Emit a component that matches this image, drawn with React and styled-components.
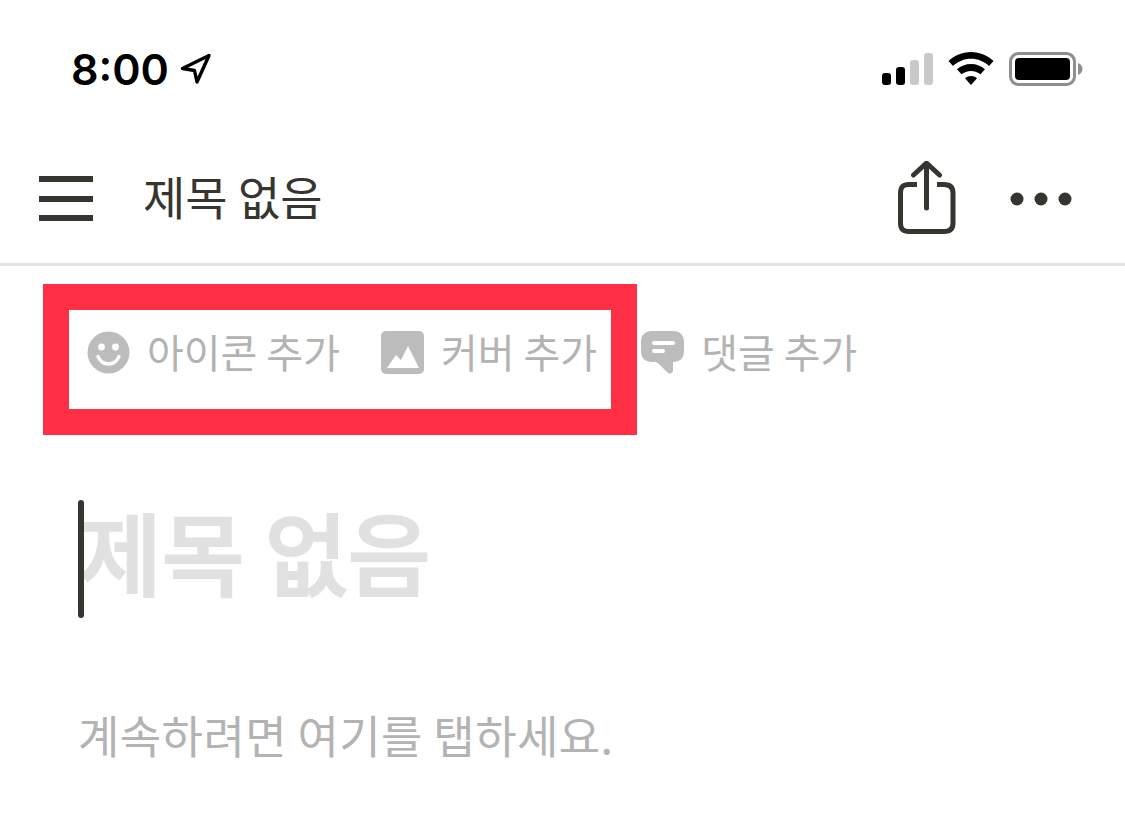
import React from "react";
import styled, { createGlobalStyle } from "styled-components";

const KR = `"Noto Sans CJK KR", "Noto Sans", sans-serif`;

const GlobalStyle = createGlobalStyle`
  html, body {
    margin: 0;
    padding: 0;
    background: #fff;
    overflow: hidden;
  }
`;

function LocationIcon() {
  return (
    <svg width="32" height="32" viewBox="0 0 32 32" fill="none">
      <path
        d="M2.5 15.5 L29 2.5 L17 29 L14.5 17.5 Z"
        stroke="#000"
        strokeWidth="3.4"
        strokeLinejoin="round"
      />
    </svg>
  );
}

function SignalIcon() {
  return (
    <svg width="51" height="34" viewBox="0 0 51 34">
      <rect x="0" y="21" width="9" height="12" rx="3" fill="#000" />
      <rect x="14" y="15" width="9" height="18" rx="3" fill="#000" />
      <rect x="28" y="8" width="9" height="25" rx="3" fill="#c9c9c9" />
      <rect x="42" y="1" width="9" height="32" rx="3" fill="#c9c9c9" />
    </svg>
  );
}

function WifiIcon() {
  return (
    <svg width="46" height="34" viewBox="0 0 46 34">
      <path
        d="M23 0 C14 0 6.500 3.500 0.500 9 L5 14 C10 9.500 16 6.800 23 6.800 C30 6.800 36 9.500 41 14 L45.500 9 C39.500 3.500 32 0 23 0 Z"
        fill="#000"
      />
      <path
        d="M23 12 C17.500 12 13 14 9 17.300 L13.500 22.300 C16 20.200 19.300 18.900 23 18.900 C26.700 18.900 30 20.200 32.500 22.300 L37 17.300 C33 14 28.500 12 23 12 Z"
        fill="#000"
      />
      <path
        d="M23 24 C20.600 24 18.800 24.800 17 26.300 L23 33 L29 26.300 C27.200 24.800 25.400 24 23 24 Z"
        fill="#000"
      />
    </svg>
  );
}

function BatteryIcon() {
  return (
    <svg width="74" height="34" viewBox="0 0 74 34">
      <rect x="1.500" y="1.500" width="64" height="31" rx="8" fill="none" stroke="#8e8e8e" strokeWidth="3" />
      <rect x="6" y="6" width="55" height="22" rx="4" fill="#000" />
      <path d="M69 11 C72 12 73.500 14.500 73.500 17 C73.500 19.500 72 22 69 23 Z" fill="#8e8e8e" />
    </svg>
  );
}

function MenuIcon() {
  return (
    <svg width="54" height="46" viewBox="0 0 54 46">
      <rect x="0" y="0" width="54" height="6" fill="#37352f" />
      <rect x="0" y="20" width="54" height="6" fill="#37352f" />
      <rect x="0" y="39" width="54" height="6" fill="#37352f" />
    </svg>
  );
}

function ShareIcon() {
  return (
    <svg width="58" height="73" viewBox="0 0 58 73" fill="none" stroke="#37352f" strokeWidth="5">
      <path d="M19 23.500 H11 C5 23.500 2.500 26 2.500 32 V62 C2.500 68 5 70.500 11 70.500 H46 C52 70.500 55 68 55 62 V32 C55 26 52 23.500 46 23.500 H39" />
      <path d="M28.500 47 V3" strokeLinecap="round" />
      <path d="M15.500 14 L28.500 2 L41.500 14" strokeLinecap="round" strokeLinejoin="round" />
    </svg>
  );
}

function DotsIcon() {
  return (
    <svg width="62" height="14" viewBox="0 0 62 14" fill="#37352f">
      <circle cx="7" cy="7" r="6.500" />
      <circle cx="31" cy="7" r="6.500" />
      <circle cx="55" cy="7" r="6.500" />
    </svg>
  );
}

function SmileIcon() {
  return (
    <svg width="43" height="43" viewBox="0 0 43 43">
      <circle cx="21.500" cy="21.500" r="21" fill="#bcbcbc" />
      <circle cx="14.500" cy="16" r="3.400" fill="#fff" />
      <circle cx="28.500" cy="16" r="3.400" fill="#fff" />
      <path d="M11 25.500 C13.500 31 17 33 21.500 33 C26 33 29.500 31 32 25.500" fill="none" stroke="#fff" strokeWidth="3.400" strokeLinecap="round" />
    </svg>
  );
}

function CoverIcon() {
  return (
    <svg width="43" height="43" viewBox="0 0 43 43">
      <rect x="0" y="0" width="43" height="43" rx="5" fill="#bcbcbc" />
      <path d="M6 37 L15 24 L20 29 L27 15 L38 37 Z" fill="#fff" />
    </svg>
  );
}

function CommentIcon() {
  return (
    <svg width="43" height="43" viewBox="0 0 43 43">
      <path
        d="M11 0 H32 C39 0 43 4 43 11 V20 C43 27 39 31 32 31 V39 C32 43 28.500 43.500 26 41 L18 33 C16.500 31.500 15 31 13 31 H11 C4 31 0 27 0 20 V11 C0 4 4 0 11 0 Z"
        fill="#bcbcbc"
      />
      <rect x="11" y="10" width="23" height="4" rx="2" fill="#fff" />
      <rect x="11" y="18" width="13" height="4" rx="2" fill="#fff" />
    </svg>
  );
}

export default function App() {
  return (
    <>
      <GlobalStyle />
      <Page>
        <StatusBar>
          <Clock>
            <Time>8:00</Time>
            <LocationIcon />
          </Clock>
          <StatusIcons>
            <SignalIcon />
            <WifiIcon />
            <BatteryIcon />
          </StatusIcons>
        </StatusBar>

        <NavBar>
          <NavLeft>
            <MenuSlot>
              <MenuIcon />
            </MenuSlot>
            <NavTitle>제목 없음</NavTitle>
          </NavLeft>
          <NavRight>
            <ShareIcon />
            <DotsSlot>
              <DotsIcon />
            </DotsSlot>
          </NavRight>
        </NavBar>

        <Actions>
          <Action>
            <SmileIcon />
            <ActionLabel>아이콘 추가</ActionLabel>
          </Action>
          <Action $offset={40}>
            <CoverIcon />
            <ActionLabel>커버 추가</ActionLabel>
          </Action>
          <Action $offset={43}>
            <CommentIcon />
            <ActionLabel>댓글 추가</ActionLabel>
          </Action>
          <Highlight />
        </Actions>

        <Editor>
          <TitleRow>
            <Caret />
            <Title>제목 없음</Title>
          </TitleRow>
          <Placeholder>계속하려면 여기를 탭하세요.</Placeholder>
        </Editor>
      </Page>
    </>
  );
}

const Page = styled.div`
  width: 1125px;
  height: 823px;
  background: #fff;
  overflow: hidden;
`;

const StatusBar = styled.div`
  height: 135px;
  box-sizing: border-box;
  padding: 41px 42px 0 71px;
  display: flex;
  justify-content: space-between;
  align-items: flex-start;
`;

const Clock = styled.div`
  display: flex;
  align-items: center;
  gap: 11px;
  height: 56px;
`;

const Time = styled.span`
  font-family: Inter, "Liberation Sans", sans-serif;
  font-size: 43px;
  font-weight: 600;
  line-height: 56px;
  color: #000;
`;

const StatusIcons = styled.div`
  display: flex;
  align-items: flex-end;
  gap: 15px;
  padding-top: 11px;
  height: 34px;
`;

const NavBar = styled.div`
  height: 131px;
  box-sizing: border-box;
  padding: 0 53px 4px 39px;
  border-bottom: 3px solid #e3e3e2;
  display: flex;
  justify-content: space-between;
  align-items: center;
`;

const NavLeft = styled.div`
  display: flex;
  align-items: center;
  gap: 51px;
`;

const MenuSlot = styled.div`
  display: flex;
  margin-top: 4px;
`;

const NavTitle = styled.span`
  font-family: ${KR};
  font-size: 46px;
  line-height: 60px;
  color: #37352f;
  margin-left: -1px;
  margin-bottom: 4px;
`;

const NavRight = styled.div`
  display: flex;
  align-items: center;
  gap: 54px;
`;

const DotsSlot = styled.div`
  display: flex;
  margin-top: 4px;
`;

const Actions = styled.div`
  position: relative;
  height: 111px;
  box-sizing: border-box;
  padding: 62px 0 0 87px;
  display: flex;
  align-items: center;
`;

const Action = styled.div`
  display: flex;
  align-items: center;
  gap: 17px;
  margin-left: ${props => props.$offset || 0}px;
`;

const ActionLabel = styled.span`
  font-family: ${KR};
  font-size: 40px;
  line-height: 44px;
  color: #b3b3b3;
  margin-right: 1px;
  margin-bottom: 4px;
`;

const Highlight = styled.div`
  position: absolute;
  left: 43px;
  top: 18px;
  width: 594px;
  height: 151px;
  box-sizing: border-box;
  border: 26px solid #ff2f45;
`;

const Editor = styled.div`
  padding: 123px 0 0 78px;
`;

const TitleRow = styled.div`
  display: flex;
  align-items: flex-start;
  height: 118px;
`;

const Caret = styled.div`
  width: 6px;
  height: 118px;
  border-radius: 3px;
  background: #37352f;
  position: relative;
  z-index: 1;
`;

const Title = styled.h1`
  margin: -9px 0 0 -5px;
  font-family: ${KR};
  font-size: 90px;
  font-weight: 500;
  line-height: 118px;
  color: #e1e1e1;
  -webkit-text-stroke: 2px #e1e1e1;
`;

const Placeholder = styled.p`
  margin: 89px 0 0;
  font-family: ${KR};
  font-size: 45px;
  letter-spacing: 0.4px;
  line-height: 56px;
  color: #b3b3b3;
`;
